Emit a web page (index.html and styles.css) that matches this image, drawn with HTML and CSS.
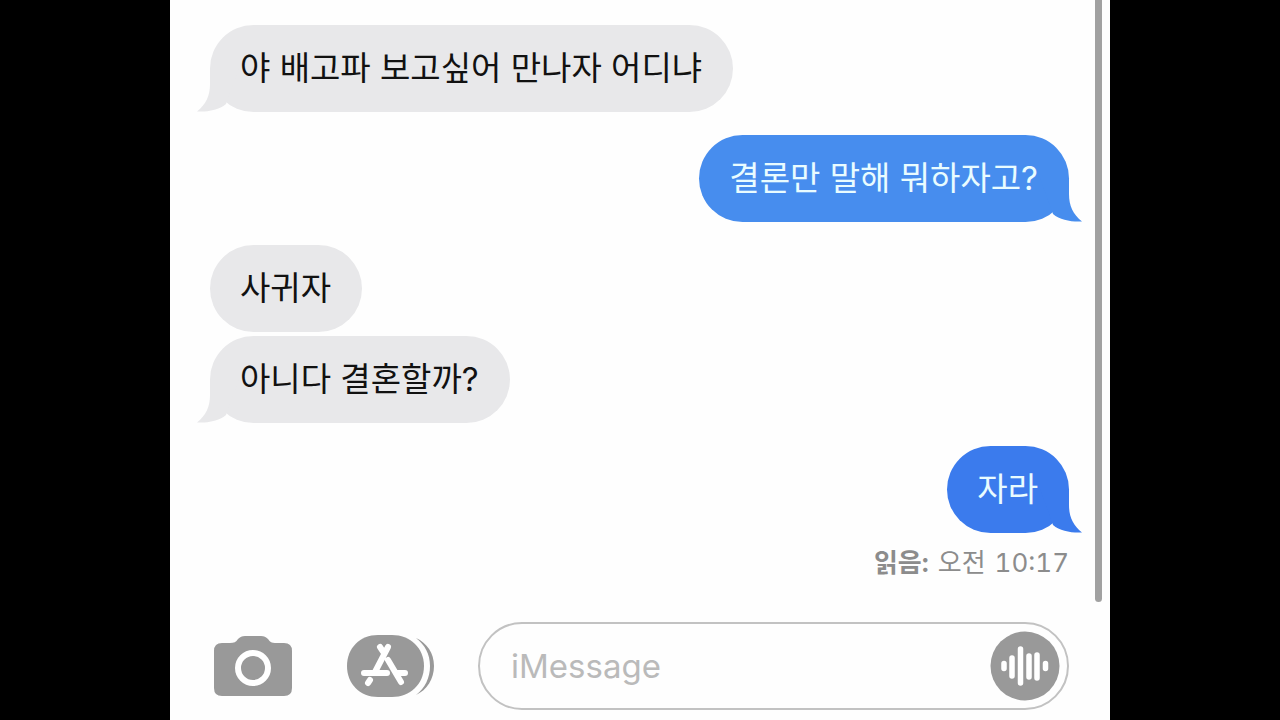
FILE: index.html
```html
<!DOCTYPE html>
<html lang="ko">
<head>
<meta charset="utf-8">
<title>iMessage</title>
<link rel="stylesheet" href="styles.css">
</head>
<body>
<svg class="defs" aria-hidden="true">
  <symbol id="tail" viewBox="0 0 42 44"><path d="M13 0V16C13 28 9 36 0 43.500C11 44 22 42 29 36L42 0Z"/></symbol>
</svg>
<main class="phone">
  <div class="thread">
    <div class="message received">야 배고파 보고싶어 만나자 어디냐<svg class="tail" aria-hidden="true"><use href="#tail"/></svg></div>
    <div class="message sent">결론만 말해 뭐하자고?<svg class="tail" aria-hidden="true"><use href="#tail"/></svg></div>
    <div class="group">
      <div class="message received">사귀자</div>
      <div class="message received">아니다 결혼할까?<svg class="tail" aria-hidden="true"><use href="#tail"/></svg></div>
    </div>
    <div class="message sent latest">자라<svg class="tail" aria-hidden="true"><use href="#tail"/></svg></div>
  </div>
  <p class="receipt"><b>읽음:</b><span>오전</span><time>10:17</time></p>
  <form class="composer">
    <button class="tool camera" type="button" aria-label="카메라">
      <svg width="80" height="62" viewBox="0 0 80 62">
        <path fill="#999" d="M9 8H17C21 8 23 7 25 4C27 2 29 1 32 1H48C51 1 53 2 55 4C57 7 59 8 62 8H71Q79 8 79 16V53Q79 61 71 61H9Q1 61 1 53V16Q1 8 9 8Z"/>
        <circle cx="40" cy="33" r="15" fill="none" stroke="#fff" stroke-width="6"/>
      </svg>
    </button>
    <button class="tool apps" type="button" aria-label="앱">
      <svg width="90" height="64" viewBox="0 0 90 64">
        <path fill="#999" d="M32 1H46C64 1 78 14 78 32S64 63 46 63H32C14 63 1 50 1 32S14 1 32 1Z"/>
        <path fill="#999" d="M70 4C81 9 88 19 88 32S81 56 70 61C79 54 84 44 84 32S79 11 70 4Z"/>
        <g fill="none" stroke="#fff" stroke-width="6" stroke-linecap="round">
          <path d="M42 13L29 38M34 13L38 19M18 39H41M42 26L55 48M51 39H59M24 46L22 49"/>
        </g>
      </svg>
    </button>
    <div class="field">
      <input type="text" placeholder="iMessage" aria-label="iMessage">
      <button class="tool" type="button" aria-label="음성 메시지">
        <svg width="70" height="70" viewBox="0 0 70 70">
          <circle cx="35" cy="35" r="34.500" fill="#999"/>
          <g stroke="#fff" stroke-width="5.500" stroke-linecap="round">
            <path d="M14 32.500V37.500M22 27V45M30.500 18V52M39 25V46M47 24V47M55.500 32.500V37.500"/>
          </g>
        </svg>
      </button>
    </div>
  </form>
  <div class="scrollbar"></div>
</main>
</body>
</html>
```
FILE: styles.css
```css
* {
  box-sizing: border-box;
}

body {
  margin: 0;
  background: #000;
  font-family: Inter, "Noto Sans CJK KR", sans-serif;
}

.defs {
  position: absolute;
  width: 0;
  height: 0;
}

.phone {
  position: relative;
  display: flex;
  flex-direction: column;
  max-width: 940px;
  min-height: 100vh;
  margin: 0 auto;
  padding: 25px 41px 10px 40px;
  background: #fefefe;
}

.thread {
  display: flex;
  flex-direction: column;
  gap: 23px;
}

.group {
  display: flex;
  flex-direction: column;
  gap: 4px;
}

.message {
  position: relative;
  padding: 21px 31px 22px 30px;
  border-radius: 44px;
  font-size: 33px;
  line-height: 44px;
}

.received {
  align-self: flex-start;
  background: #e8e8ea;
  color: #111;
  fill: #e8e8ea;
}

.sent {
  align-self: flex-end;
  background: #478dee;
  color: #e9fcff;
  fill: #478dee;
}

.latest {
  background: #3b7bed;
  fill: #3b7bed;
}

.tail {
  position: absolute;
  bottom: 0;
  left: -13px;
  width: 42px;
  height: 44px;
}

.sent .tail {
  right: -13px;
  left: auto;
  transform: scaleX(-1);
}

.receipt {
  display: flex;
  justify-content: flex-end;
  gap: 9px;
  margin: 12px 0 24px;
  color: #8c8c8c;
  font-size: 26px;
  font-variant-numeric: tabular-nums;
  line-height: 36px;
}

.composer {
  display: flex;
  align-items: center;
  margin-top: auto;
  padding-left: 3px;
}

.tool {
  flex: none;
  padding: 0;
  border: 0;
  background: none;
}

.tool svg {
  display: block;
}

.camera {
  margin-right: 53px;
}

.apps {
  margin-right: 42px;
}

.field {
  display: flex;
  flex: 1;
  align-items: center;
  min-width: 0;
  height: 88px;
  padding: 0 7px 0 31px;
  border: 2px solid #c2c2c2;
  border-radius: 44px;
}

.field input {
  flex: 1;
  min-width: 0;
  padding: 0;
  border: 0;
  outline: 0;
  background: none;
  color: #111;
  font: 33px/44px Inter, "Noto Sans CJK KR", sans-serif;
}

.field input::placeholder {
  color: #bababa;
  opacity: 1;
}

.scrollbar {
  position: absolute;
  top: 0;
  right: 8px;
  bottom: 118px;
  width: 7px;
  border-radius: 0 0 4px 4px;
  background: #a1a1a1;
}
```
